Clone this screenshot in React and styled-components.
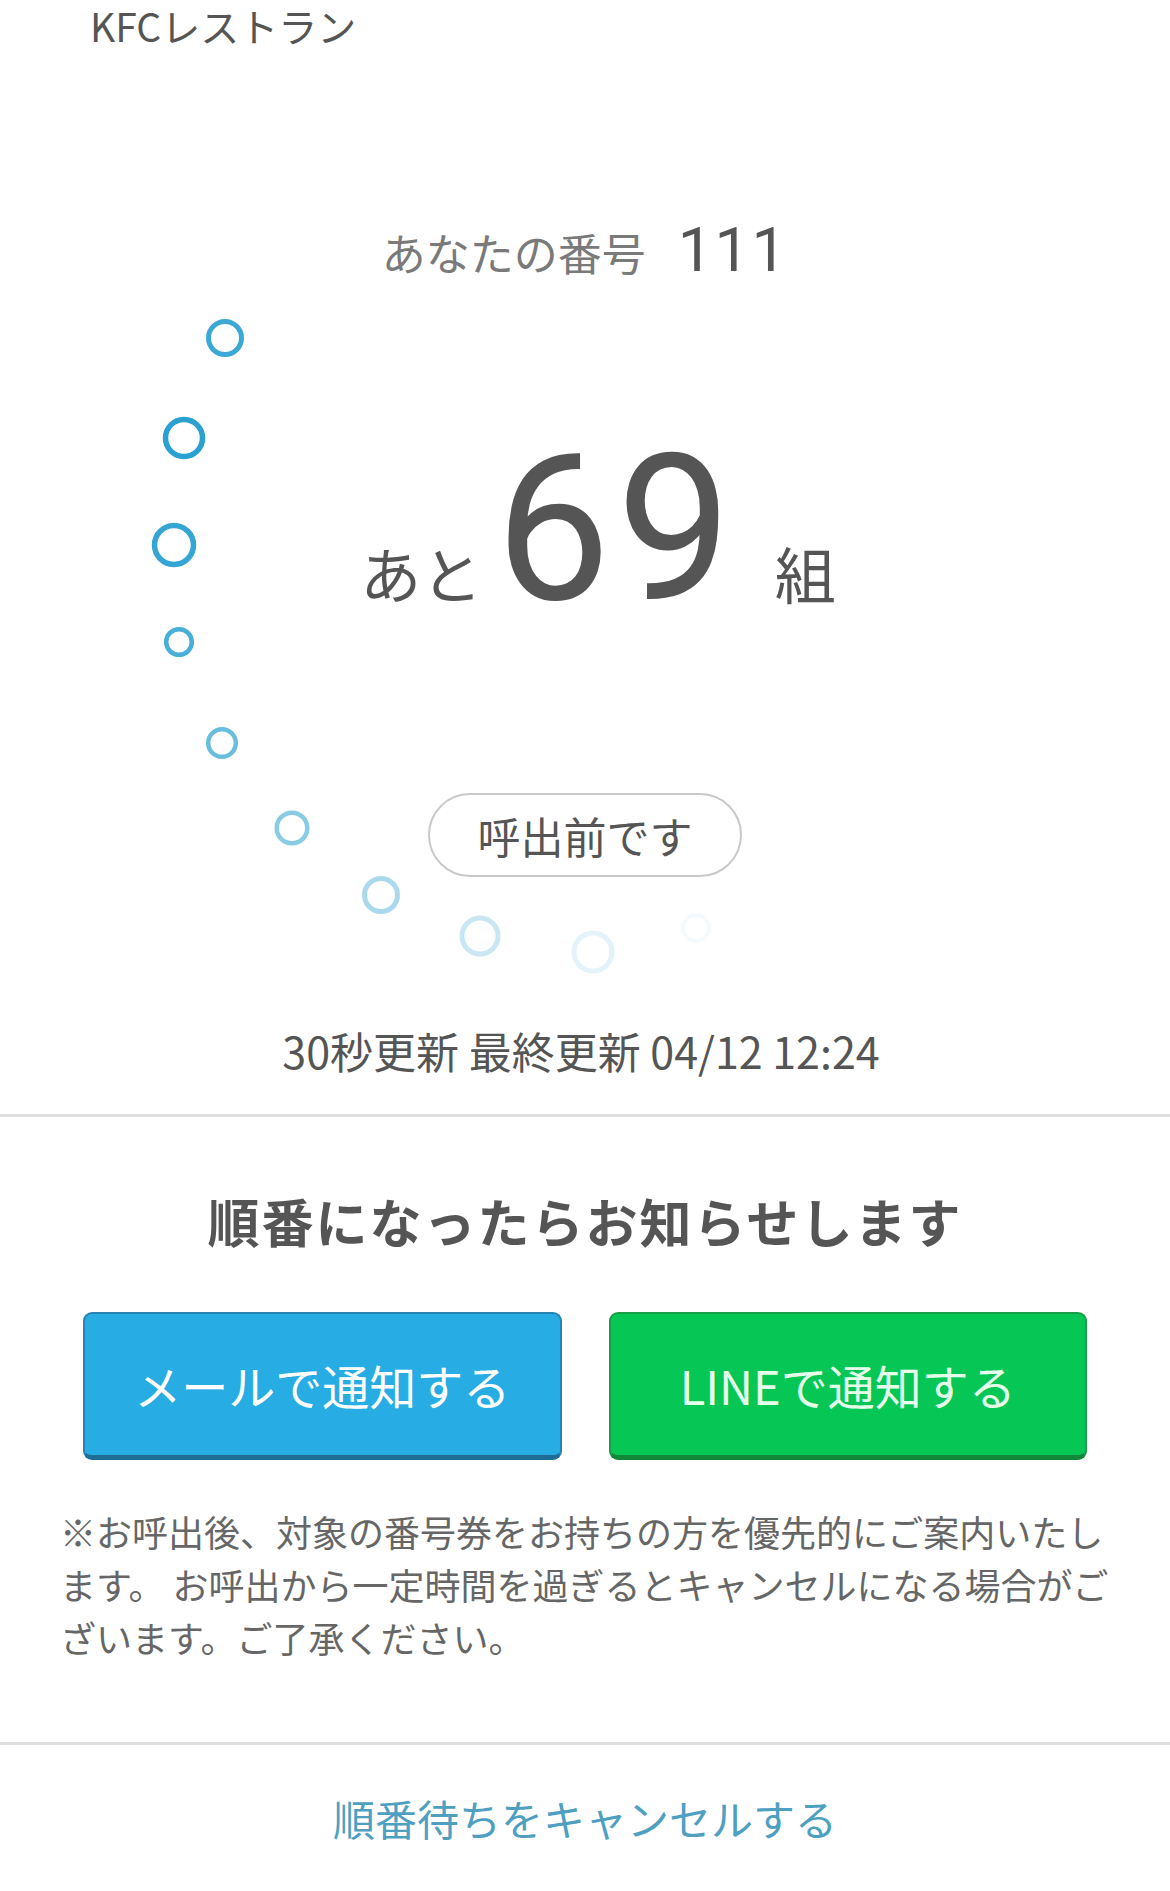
import React from 'react'
import styled, { createGlobalStyle } from 'styled-components'

const GlobalStyle = createGlobalStyle`
  body {
    margin: 0;
    background: #ffffff;
    font-family: "Noto Sans CJK JP", "Noto Sans", sans-serif;
    color: #555555;
  }
`

const spinner = [
  { x: 225, y: 288, r: 16.5, w: 5, o: 0.92 },
  { x: 184, y: 388, r: 18.5, w: 5.5, o: 1 },
  { x: 174, y: 495, r: 19.5, w: 5.5, o: 0.95 },
  { x: 179, y: 592, r: 12.8, w: 4.5, o: 0.85 },
  { x: 222, y: 693, r: 13.8, w: 4.5, o: 0.7 },
  { x: 292, y: 778, r: 15.3, w: 4.5, o: 0.55 },
  { x: 381, y: 845, r: 16.5, w: 5, o: 0.4 },
  { x: 480, y: 886, r: 18, w: 5, o: 0.26 },
  { x: 593, y: 902, r: 19, w: 5, o: 0.13 },
  { x: 696, y: 878, r: 13, w: 4, o: 0.05 },
]

const App = () =>
  <>
    <GlobalStyle />
    <Page>
      <Header>KFCレストラン</Header>

      <Hero>
        <Spinner width="1170" height="1065" viewBox="0 0 1170 1065">
          {spinner.map((c, i) =>
            <circle key={i} cx={c.x} cy={c.y} r={c.r} fill="none"
              stroke="#2aa1d1" strokeWidth={c.w} strokeOpacity={c.o} />
          )}
        </Spinner>

        <NumberLine>
          <NumberLabel>あなたの番号</NumberLabel>
          <TicketNo>111</TicketNo>
        </NumberLine>

        <Counter>
          <Unit $gap="13px">あと</Unit>
          <Big>69</Big>
          <Unit $before="37px">組</Unit>
        </Counter>

        <Status>呼出前です</Status>

        <Updated>30秒更新 最終更新 04/12 12:24</Updated>
      </Hero>

      <Notify>
        <NotifyTitle>順番になったらお知らせします</NotifyTitle>
        <Buttons>
          <NotifyButton $kind="mail">メールで通知する</NotifyButton>
          <NotifyButton $kind="line">LINEで通知する</NotifyButton>
        </Buttons>
        <Note>
          ※お呼出後、対象の番号券をお持ちの方を優先的にご案内いたし<br />
          ます。 お呼出から一定時間を過ぎるとキャンセルになる場合がご<br />
          ざいます。ご了承ください。
        </Note>
      </Notify>

      <Footer>
        <CancelLink href="#">順番待ちをキャンセルする</CancelLink>
      </Footer>
    </Page>
  </>

const Page = styled.div`
  width: 1170px;
  min-height: 1891px;
  background: #ffffff;
`

const Header = styled.header`
  box-sizing: border-box;
  height: 50px;
  padding: 3px 0 0 90px;
  font-size: 39px;
  line-height: 44px;
  color: #555555;
`

const Hero = styled.section`
  position: relative;
  display: flex;
  flex-direction: column;
  align-items: center;
  padding: 170px 0 39px;
  border-bottom: 3px solid #dedede;
`

const Spinner = styled.svg`
  position: absolute;
  top: 0;
  left: 0;
  pointer-events: none;
`

const NumberLine = styled.div`
  display: flex;
  align-items: baseline;
  gap: 32px;
  height: 60px;
  line-height: 60px;
`

const NumberLabel = styled.span`
  font-size: 44px;
  color: #7a7a7a;
`

const TicketNo = styled.span`
  font-family: Roboto, "Noto Sans", sans-serif;
  font-size: 62px;
  color: #555555;
  letter-spacing: 2px;
`

const Counter = styled.div`
  display: flex;
  align-items: baseline;
  margin-top: 147px;
  padding-left: 26px;
  line-height: 1;
`

const Unit = styled.span`
  font-size: 61px;
  color: #555555;
  margin-right: ${props => props.$gap || '0'};
  margin-left: ${props => props.$before || '0'};
`

const Big = styled.span`
  font-family: Roboto, "Noto Sans", sans-serif;
  font-size: 205px;
  letter-spacing: 6px;
  color: #555555;
`

const Status = styled.div`
  box-sizing: border-box;
  width: 314px;
  height: 84px;
  margin-top: 161px;
  border: 2px solid #c9c9c9;
  border-radius: 42px;
  display: flex;
  align-items: center;
  justify-content: center;
  font-size: 43px;
  color: #555555;
`

const Updated = styled.div`
  margin-top: 148px;
  margin-right: 8px;
  font-size: 43px;
  line-height: 50px;
  color: #555555;
`

const Notify = styled.section`
  display: flex;
  flex-direction: column;
  align-items: center;
  padding: 72px 0 78px;
  border-bottom: 3px solid #dedede;
`

const NotifyTitle = styled.h2`
  margin: 0;
  font-size: 52px;
  line-height: 64px;
  font-weight: 700;
  letter-spacing: 2px;
  color: #555555;
`

const Buttons = styled.div`
  display: grid;
  grid-template-columns: 1fr 1fr;
  gap: 47px;
  box-sizing: border-box;
  width: 100%;
  padding: 0 83px;
  margin-top: 59px;
`

const NotifyButton = styled.button`
  box-sizing: border-box;
  height: 148px;
  border-radius: 9px;
  font-family: inherit;
  font-size: 47px;
  cursor: pointer;
  background: ${props => props.$kind === 'line' ? '#06c755' : '#27ade3'};
  color: ${props => props.$kind === 'line' ? '#e4ffea' : '#ffffff'};
  border: 2px solid ${props => props.$kind === 'line' ? '#179e47' : '#2683b3'};
  border-bottom: 5px solid ${props => props.$kind === 'line' ? '#11873a' : '#1d6d97'};
`

const Note = styled.p`
  align-self: stretch;
  margin: 45px 0 0;
  padding: 0 0 0 60px;
  font-size: 36px;
  line-height: 53px;
  white-space: nowrap;
  color: #666666;
`

const Footer = styled.footer`
  display: flex;
  justify-content: center;
  padding-top: 48px;
`

const CancelLink = styled.a`
  font-size: 42px;
  line-height: 50px;
  color: #4f9fc1;
  text-decoration: none;
`

export default App
